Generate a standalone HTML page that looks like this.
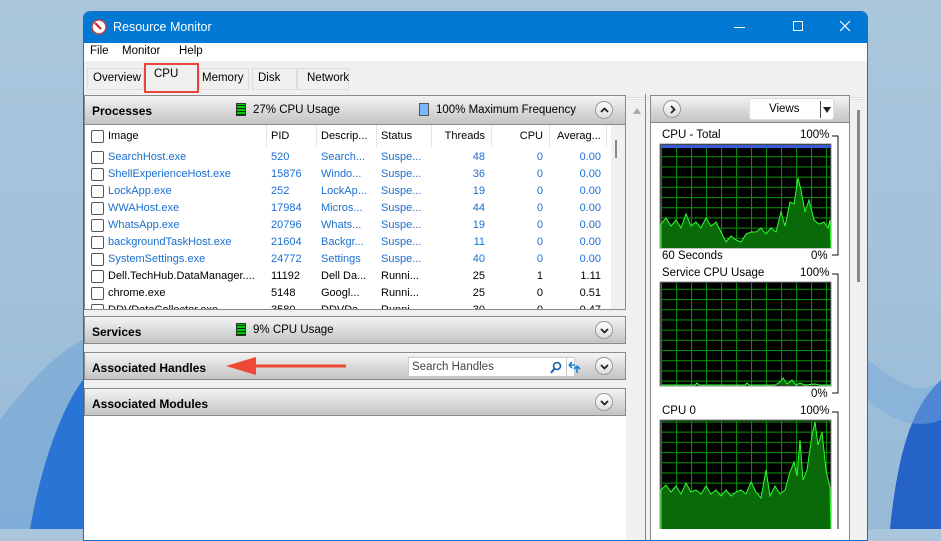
<!DOCTYPE html>
<html><head><meta charset="utf-8"><style>
*{margin:0;padding:0;box-sizing:border-box}
body{width:941px;height:529px;overflow:hidden;position:relative;font-family:"Liberation Sans",sans-serif;font-size:11.5px;color:#000;
background:linear-gradient(180deg,#a9c6dc 0%,#a3c2da 50%,#97bad8 100%)}
.a{position:absolute}
.win{left:83px;top:11px;width:785px;height:530px;background:#f0f0f0;border-radius:7px 7px 0 0;overflow:hidden;border:1px solid #1a6fc0}
.title{left:0;top:0;width:785px;height:31px;background:#0078d4;color:#fff;font-size:12.5px}
.hdr{background:linear-gradient(#f4f4f4,#d6d6d6 60%,#c4c4c4);border:1px solid #8a8a8a}
.hdr b{position:absolute;left:7px;font-size:12px}
.circ{position:absolute;width:18px;height:18px;border-radius:50%;border:1px solid #999;background:linear-gradient(#fff,#ddd)}
.circ svg{position:absolute;left:4px;top:4px}
.row{position:absolute;left:0;height:17px;width:540px;font-size:11px}
.row span{position:absolute;top:2px;white-space:nowrap}
.cb{position:absolute;left:6px;top:2px;width:13px;height:13px;border:1px solid #555;border-radius:2px;background:#fff}
.bl{color:#1a6fd0}
.r{text-align:right}
.sep{position:absolute;top:0;width:1px;height:22px;background:#e5e5e5}
.lbl{position:absolute;font-size:11.5px}
</style></head><body>
<svg class="a" style="left:0;top:0" width="941" height="529">
<path d="M0 420 C30 380 60 350 83 340 L83 529 L0 529Z" fill="#6a9fd6" opacity=".5"/>
<path d="M30 529 C40 470 60 410 83 380 L83 529Z" fill="#2a74d6"/>
<path d="M941 380 C920 400 900 430 890 529 L941 529Z" fill="#2563c8"/>
<path d="M868 360 C895 380 920 400 941 380 L941 420 C915 430 890 420 868 400Z" fill="#7aaade" opacity=".5"/>
</svg>
<div class="a win">
 <div class="a title">
  <svg class="a" style="left:7px;top:7px" width="16" height="16"><circle cx="8" cy="8" r="7" fill="#fff" stroke="#b44" stroke-width="1.5"/><path d="M4 4 L10 10" stroke="#c22" stroke-width="2"/></svg>
  <span class="a" style="left:29px;top:8px">Resource Monitor</span>
  <div class="a" style="left:650px;top:15px;width:11px;height:1px;background:#fff"></div>
  <div class="a" style="left:709px;top:9px;width:10px;height:10px;border:1px solid #fff"></div>
  <svg class="a" style="left:755px;top:8px" width="12" height="12"><path d="M1 1L11 11M11 1L1 11" stroke="#fff" stroke-width="1.2"/></svg>
 </div>
 <div class="a" style="left:0;top:31px;width:785px;height:18px;background:#fff">
  <span class="a" style="left:6px;top:2px">File</span><span class="a" style="left:38px;top:2px">Monitor</span><span class="a" style="left:95px;top:2px">Help</span>
 </div>
 <div class="a" style="left:3px;top:56px;width:57px;height:22px;border:1px solid #ddd;background:#f0f0f0"><span class="a" style="left:5px;top:3px">Overview</span></div>
 <div class="a" style="left:115px;top:56px;width:50px;height:22px;border:1px solid #ddd"><span class="a" style="left:2px;top:3px">Memory</span></div>
 <div class="a" style="left:168px;top:56px;width:45px;height:22px;border:1px solid #ddd"><span class="a" style="left:5px;top:3px">Disk</span></div>
 <div class="a" style="left:213px;top:56px;width:52px;height:22px;border:1px solid #ddd"><span class="a" style="left:9px;top:3px">Network</span></div>
 <div class="a" style="left:60px;top:51px;width:55px;height:30px;border:2px solid #e8463c;background:#f0f0f0"><span class="a" style="left:8px;top:3px">CPU</span></div>
 <div class="a" style="left:0;top:85px;width:780px;height:3px;background:#fafafa;border:1px solid #e0e0e0"></div>

 <div class="a" style="left:0;top:92px;width:542px;height:440px;background:#fff"></div>
 <div class="a hdr" style="left:0;top:83px;width:542px;height:30px"><b style="top:8px">Processes</b>
  <div class="a" style="left:151px;top:7px;width:10px;height:13px;background:#0c0;border:1px solid #333;background-image:repeating-linear-gradient(0deg,#030 0 1px,transparent 1px 3px)"></div>
  <span class="a" style="left:168px;top:8px">27% CPU Usage</span>
  <div class="a" style="left:334px;top:7px;width:10px;height:13px;background:#7ab7ff;border:1px solid #555"></div>
  <span class="a" style="left:351px;top:8px">100% Maximum Frequency</span>
  <div class="circ" style="left:510px;top:5px"><svg width="9" height="9"><path d="M1 6L4.5 2.5L8 6" stroke="#222" stroke-width="1.8" fill="none"/></svg></div>
 </div>
 <div class="a" style="left:0;top:113px;width:527px;height:185px;background:#fff;overflow:hidden;border-left:1px solid #8a8a8a">
  <div class="sep" style="left:181px"></div><div class="sep" style="left:231px"></div><div class="sep" style="left:291px"></div><div class="sep" style="left:346px"></div><div class="sep" style="left:406px"></div><div class="sep" style="left:464px"></div><div class="sep" style="left:521px"></div>
  <div class="row" style="top:3px"><div class="cb"></div><span style="left:23px">Image</span><span style="left:186px">PID</span><span style="left:236px">Descrip...</span><span style="left:296px">Status</span><span class="r" style="left:340px;width:60px">Threads</span><span class="r" style="left:410px;width:48px">CPU</span><span style="left:472px">Averag...</span></div>
  <div class="row bl" style="top:24px"><div class="cb"></div><span style="left:23px">SearchHost.exe</span><span style="left:186px">520</span><span style="left:236px">Search...</span><span style="left:296px">Suspe...</span><span class="r" style="left:340px;width:60px">48</span><span class="r" style="left:410px;width:48px">0</span><span class="r" style="left:470px;width:46px">0.00</span></div>
  <div class="row bl" style="top:41px"><div class="cb"></div><span style="left:23px">ShellExperienceHost.exe</span><span style="left:186px">15876</span><span style="left:236px">Windo...</span><span style="left:296px">Suspe...</span><span class="r" style="left:340px;width:60px">36</span><span class="r" style="left:410px;width:48px">0</span><span class="r" style="left:470px;width:46px">0.00</span></div>
  <div class="row bl" style="top:58px"><div class="cb"></div><span style="left:23px">LockApp.exe</span><span style="left:186px">252</span><span style="left:236px">LockAp...</span><span style="left:296px">Suspe...</span><span class="r" style="left:340px;width:60px">19</span><span class="r" style="left:410px;width:48px">0</span><span class="r" style="left:470px;width:46px">0.00</span></div>
  <div class="row bl" style="top:75px"><div class="cb"></div><span style="left:23px">WWAHost.exe</span><span style="left:186px">17984</span><span style="left:236px">Micros...</span><span style="left:296px">Suspe...</span><span class="r" style="left:340px;width:60px">44</span><span class="r" style="left:410px;width:48px">0</span><span class="r" style="left:470px;width:46px">0.00</span></div>
  <div class="row bl" style="top:92px"><div class="cb"></div><span style="left:23px">WhatsApp.exe</span><span style="left:186px">20796</span><span style="left:236px">Whats...</span><span style="left:296px">Suspe...</span><span class="r" style="left:340px;width:60px">19</span><span class="r" style="left:410px;width:48px">0</span><span class="r" style="left:470px;width:46px">0.00</span></div>
  <div class="row bl" style="top:109px"><div class="cb"></div><span style="left:23px">backgroundTaskHost.exe</span><span style="left:186px">21604</span><span style="left:236px">Backgr...</span><span style="left:296px">Suspe...</span><span class="r" style="left:340px;width:60px">11</span><span class="r" style="left:410px;width:48px">0</span><span class="r" style="left:470px;width:46px">0.00</span></div>
  <div class="row bl" style="top:126px"><div class="cb"></div><span style="left:23px">SystemSettings.exe</span><span style="left:186px">24772</span><span style="left:236px">Settings</span><span style="left:296px">Suspe...</span><span class="r" style="left:340px;width:60px">40</span><span class="r" style="left:410px;width:48px">0</span><span class="r" style="left:470px;width:46px">0.00</span></div>
  <div class="row" style="top:143px"><div class="cb"></div><span style="left:23px">Dell.TechHub.DataManager....</span><span style="left:186px">11192</span><span style="left:236px">Dell Da...</span><span style="left:296px">Runni...</span><span class="r" style="left:340px;width:60px">25</span><span class="r" style="left:410px;width:48px">1</span><span class="r" style="left:470px;width:46px">1.11</span></div>
  <div class="row" style="top:160px"><div class="cb"></div><span style="left:23px">chrome.exe</span><span style="left:186px">5148</span><span style="left:236px">Googl...</span><span style="left:296px">Runni...</span><span class="r" style="left:340px;width:60px">25</span><span class="r" style="left:410px;width:48px">0</span><span class="r" style="left:470px;width:46px">0.51</span></div>
  <div class="row" style="top:177px"><div class="cb"></div><span style="left:23px">DDVDataCollector.exe</span><span style="left:186px">3580</span><span style="left:236px">DDVDa...</span><span style="left:296px">Runni...</span><span class="r" style="left:340px;width:60px">30</span><span class="r" style="left:410px;width:48px">0</span><span class="r" style="left:470px;width:46px">0.47</span></div>
 </div>
 <div class="a" style="left:527px;top:113px;width:15px;height:185px;background:#f0f0f0;border-right:1px solid #8a8a8a"><div class="a" style="left:4px;top:15px;width:2px;height:18px;background:#888"></div></div>
 <div class="a" style="left:0;top:297px;width:542px;height:1px;background:#8a8a8a"></div>
 <div class="a" style="left:0;top:298px;width:543px;height:6px;background:#f0f0f0"></div>
 <div class="a hdr" style="left:0;top:304px;width:542px;height:28px"><b style="top:8px">Services</b>
  <div class="a" style="left:151px;top:6px;width:10px;height:13px;background:#0c0;border:1px solid #333;background-image:repeating-linear-gradient(0deg,#030 0 1px,transparent 1px 3px)"></div>
  <span class="a" style="left:168px;top:7px">9% CPU Usage</span>
  <div class="circ" style="left:510px;top:4px"><svg width="9" height="9"><path d="M1 3L4.5 6.5L8 3" stroke="#222" stroke-width="1.8" fill="none"/></svg></div></div>
 <div class="a" style="left:0;top:332px;width:543px;height:8px;background:#f0f0f0"></div>
 <div class="a hdr" style="left:0;top:340px;width:542px;height:28px"><b style="top:8px">Associated Handles</b>
  <div class="a" style="left:323px;top:4px;width:167px;height:20px;background:#fff;border:1px solid #ccc"><span class="a" style="left:3px;top:3px;color:#444">Search Handles</span>
   <svg class="a" style="left:141px;top:3px" width="12" height="13"><circle cx="7" cy="5" r="3.5" fill="none" stroke="#1b5fb0" stroke-width="1.6"/><path d="M4.5 7.5L1 12" stroke="#1b5fb0" stroke-width="2"/></svg>
   <div class="a" style="left:157px;top:0;width:1px;height:18px;background:#ccc"></div>
   <svg class="a" style="left:159px;top:2px" width="14" height="14"><path d="M1 5H7M1 5L4 2M1 5L4 8" stroke="#1b7fd8" stroke-width="1.6" fill="none"/><path d="M9 13V6M9 6L6 9M9 6L12 9" stroke="#1b7fd8" stroke-width="1.6" fill="none"/></svg></div>
  <div class="circ" style="left:510px;top:4px"><svg width="9" height="9"><path d="M1 3L4.5 6.5L8 3" stroke="#222" stroke-width="1.8" fill="none"/></svg></div></div>
 <svg class="a" style="left:140px;top:345px" width="125" height="20"><path d="M122 9H30" stroke="#ef4836" stroke-width="3"/><path d="M2 9L32 0V18Z" fill="#ef4836"/></svg>
 <div class="a" style="left:0;top:368px;width:543px;height:8px;background:#f0f0f0"></div>
 <div class="a hdr" style="left:0;top:376px;width:542px;height:28px"><b style="top:8px">Associated Modules</b><div class="circ" style="left:510px;top:4px"><svg width="9" height="9"><path d="M1 3L4.5 6.5L8 3" stroke="#222" stroke-width="1.8" fill="none"/></svg></div></div>
 <div class="a" style="left:0;top:404px;width:542px;height:130px;background:#fff"></div>
 <div class="a" style="left:547px;top:92px;width:12px;height:440px;background:#f0f0f0"><div class="a" style="left:2px;top:4px;width:0;height:0;border-left:4px solid transparent;border-right:4px solid transparent;border-bottom:6px solid #aaa"></div></div>
 <div class="a" style="left:561px;top:82px;width:1px;height:450px;background:#888"></div>

 <div class="a" style="left:566px;top:83px;width:200px;height:450px;background:#fff;border:1px solid #888"></div>
 <div class="a hdr" style="left:566px;top:83px;width:200px;height:28px">
  <div class="circ" style="left:12px;top:4px"><svg width="9" height="9"><path d="M3 1L6.5 4.5L3 8" stroke="#222" stroke-width="1.8" fill="none"/></svg></div>
  <div class="a" style="left:98px;top:2px;width:85px;height:22px;background:#fff;border:1px solid #ddd;border-radius:3px"><span class="a" style="left:19px;top:4px">Views</span><div class="a" style="left:70px;top:2px;width:1px;height:17px;background:#444"></div><div class="a" style="left:73px;top:8px;border-left:4px solid transparent;border-right:4px solid transparent;border-top:6px solid #222"></div></div>
 </div>
 <div class="a" style="left:773px;top:98px;width:3px;height:172px;background:#888"></div>
</div>

<span class="lbl" style="left:662px;top:129px">CPU - Total</span><span class="lbl" style="left:800px;top:129px">100%</span>
<span class="lbl" style="left:662px;top:250px">60 Seconds</span><span class="lbl" style="left:811px;top:250px">0%</span>
<span class="lbl" style="left:662px;top:267px">Service CPU Usage</span><span class="lbl" style="left:800px;top:267px">100%</span>
<span class="lbl" style="left:811px;top:388px">0%</span>
<span class="lbl" style="left:662px;top:405px">CPU 0</span><span class="lbl" style="left:800px;top:405px">100%</span>
<svg class="a" style="left:0;top:0" width="941" height="529">
 <defs>
  <pattern id="g" width="15" height="10.2" patternUnits="userSpaceOnUse" x="661" y="146"><path d="M0.5 0V10.2M0 0.5H15" stroke="#0a8a0a" stroke-width="1.2"/></pattern>
 </defs>
 <path d="M832 136H838V255H832M832 274H838V393H832M832 412H838V529" stroke="#111" fill="none"/>
 <rect x="660" y="144" width="171" height="104" fill="#000" stroke="#888"/>
 <rect x="661" y="146" width="170" height="102" fill="url(#g)"/>
 <rect x="661" y="145" width="170" height="3" fill="#3a5bd8"/>
 <polyline fill="#0a6a0a" stroke="#2cff2c" stroke-width="1" points="661,248 661,224 666,218 671,226 676,220 681,228 686,214 691,226 696,222 701,228 706,218 711,226 716,222 721,232 726,242 731,236 736,240 741,242 746,234 751,232 756,232 761,228 766,234 771,228 776,232 781,212 785,226 790,202 794,204 798,178 801,190 805,212 809,200 814,220 819,224 824,222 828,228 830,220 831,248"/>
 <rect x="660" y="282" width="171" height="104" fill="#000" stroke="#888"/>
 <rect x="661" y="283" width="170" height="102" fill="url(#g)"/>
 <polyline fill="#0a6a0a" stroke="#2cff2c" points="661,385 695,385 697,383 699,385 745,385 747,383 749,385 775,385 780,382 783,378 787,384 792,380 796,385 800,383 805,385 815,384 820,385 831,385"/>
 <rect x="660" y="420" width="171" height="112" fill="#000" stroke="#888"/>
 <rect x="661" y="421" width="170" height="110" fill="url(#g)"/>
 <polyline fill="#0a6a0a" stroke="#2cff2c" points="661,529 661,490 666,485 671,492 676,486 681,494 686,483 691,492 696,490 701,494 706,486 711,494 716,490 721,496 726,490 731,496 736,492 741,490 746,494 751,482 756,492 761,498 766,470 770,496 775,486 780,494 785,490 790,472 794,462 797,476 800,440 803,480 807,470 812,435 815,422 818,445 822,432 826,470 830,488 831,529"/>
</svg>
</body></html>
